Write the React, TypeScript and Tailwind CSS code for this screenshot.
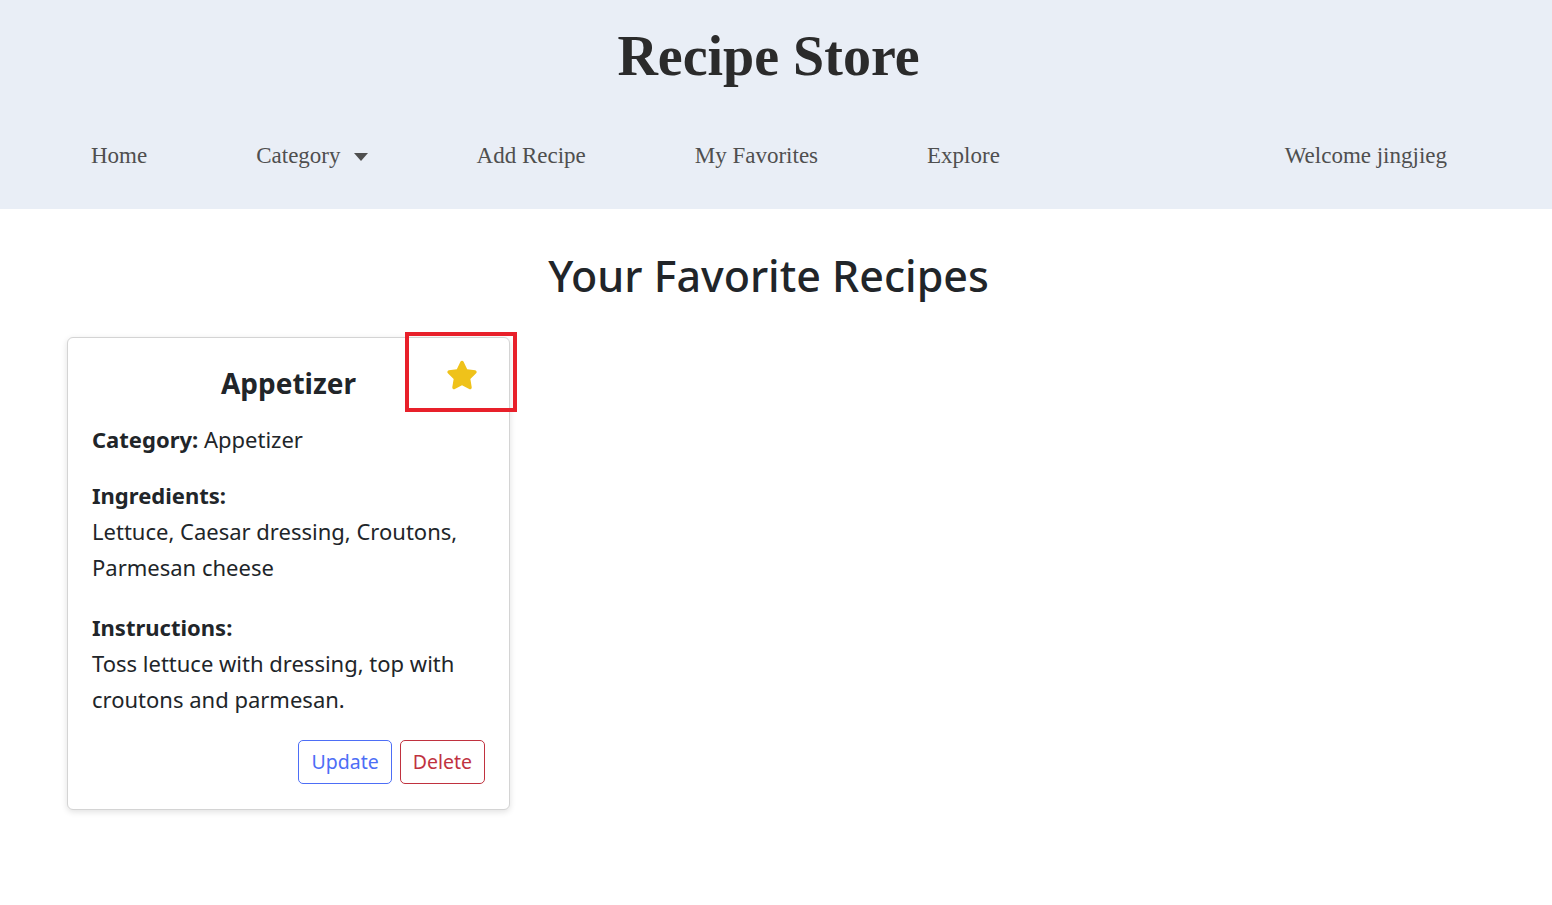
import React from 'react';

const serif = { fontFamily: '"Liberation Serif", "Times New Roman", serif' };

const navItems = ['Home', 'Category', 'Add Recipe', 'My Favorites', 'Explore'];

function Star() {
  return (
    <svg width="32" height="30" viewBox="0 0 576 512" aria-hidden="true">
      <path
        fill="#efc21a"
        d="M316.9 18c-5.3-11-16.5-18-28.8-18s-23.4 7-28.8 18L195 150.3 51.4 171.5c-12 1.8-22 10.2-25.7 21.7s-.7 24.2 7.9 32.7L137.8 329 113.2 474.7c-2 12 3 24.2 12.9 31.3s23 8 33.8 2.3l128.3-68.5 128.3 68.5c10.8 5.7 23.9 4.9 33.8-2.3s14.9-19.3 12.9-31.3L438.5 329 542.7 225.9c8.6-8.5 11.7-21.2 7.9-32.7s-13.7-19.9-25.7-21.7L381.2 150.3 316.9 18z"
      />
    </svg>
  );
}

function RecipeCard() {
  return (
    <div className="relative w-[443px] rounded-md border border-[#d4d4d4] bg-white px-6 pt-[22px] pb-[25px] shadow-[0_2px_6px_rgba(0,0,0,0.12)]">
      <h3 className="text-center text-[28px] font-bold leading-[46px] text-[#212529]">Appetizer</h3>
      <div className="absolute right-[31px] top-[22px]">
        <Star />
      </div>
      <p className="mt-[15px] leading-[36px]">
        <span className="font-bold">Category:</span> Appetizer
      </p>
      <p className="mt-[20px] font-bold leading-[36px]">Ingredients:</p>
      <p className="leading-[36px]">Lettuce, Caesar dressing, Croutons, Parmesan cheese</p>
      <p className="mt-[24px] font-bold leading-[36px]">Instructions:</p>
      <p className="leading-[36px]">Toss lettuce with dressing, top with croutons and parmesan.</p>
      <div className="mt-[23px] flex justify-end gap-2 text-[19.5px]">
        <button className="h-[44px] rounded-[5px] border border-[#4d6ef6] px-[12px] text-[#4d6ef6]">Update</button>
        <button className="h-[44px] rounded-[5px] border border-[#c0323f] px-[12px] text-[#c0323f]">Delete</button>
      </div>
    </div>
  );
}

export default function App() {
  return (
    <div className="min-h-screen bg-white" style={{ fontFamily: '"Noto Sans", "Segoe UI", sans-serif' }}>
      <header className="h-[209px] bg-[#e9eef6]" style={serif}>
        <h1 className="pt-[23px] pr-[15px] text-center text-[56px] font-bold leading-[66px] text-[#2b2b2b]">Recipe Store</h1>
        <nav className="mt-[52px] flex items-center pl-[91px] pr-[105px] text-[23px] leading-[30px] text-[#4f4f4f]">
          <div className="flex items-center gap-[109px]">
            {navItems.map((item) => (
              <a key={item} className="flex items-center gap-[13px]">
                {item}
                {item === 'Category' && (
                  <span className="mt-[2px] h-0 w-0 border-x-[7px] border-t-[8px] border-x-transparent border-t-[#4f4f4f]" />
                )}
              </a>
            ))}
          </div>
          <span className="ml-auto">Welcome jingjieg</span>
        </nav>
      </header>
      <main className="relative text-[22px] text-[#212529]">
        <h2 className="pt-[41px] pr-[15px] pb-[35px] text-center text-[43px] font-medium leading-[52px] text-[#212529]">
          Your Favorite Recipes
        </h2>
        <div className="pl-[67px]">
          <RecipeCard />
        </div>
        <div className="pointer-events-none absolute left-[405px] top-[123px] h-[80px] w-[112px] border-4 border-[#e8202a]" />
      </main>
    </div>
  );
}
